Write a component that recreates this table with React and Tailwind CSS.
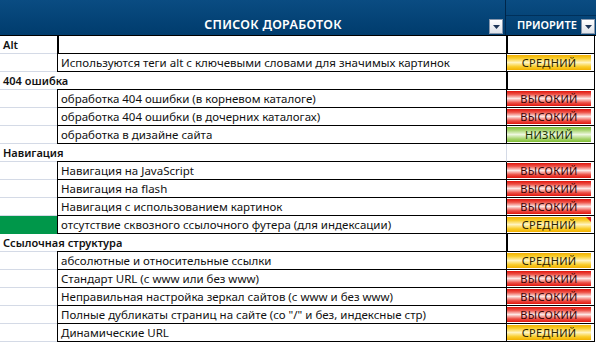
import React from 'react'

const rows = [
  { type: 'cat', label: 'Alt', boxB: true, lineC: 'black' },
  { label: 'Используются теги alt с ключевыми словами для значимых картинок', p: 'mid' },
  { type: 'cat', label: '404 ошибка', boxB: false, lineC: 'black' },
  { label: 'обработка 404 ошибки (в корневом каталоге)', p: 'high' },
  { label: 'обработка 404 ошибки (в дочерних каталогах)', p: 'high' },
  { label: 'обработка в дизайне сайта', p: 'low' },
  { type: 'cat', label: 'Навигация', boxB: false, lineC: 'light' },
  { label: 'Навигация на JavaScript', p: 'high' },
  { label: 'Навигация на flash', p: 'high' },
  { label: 'Навигация с использованием картинок', p: 'high' },
  { label: 'отсутствие сквозного ссылочного футера (для индексации)', p: 'mid', green: true, note: true },
  { type: 'cat', label: 'Ссылочная структура', boxB: false, lineC: 'black' },
  { label: 'абсолютные и относительные ссылки', p: 'mid' },
  { label: 'Стандарт URL  (с www или без www)', p: 'high' },
  { label: 'Неправильная настройка зеркал сайтов (с www и без www)', p: 'high' },
  { label: 'Полные дубликаты страниц на сайте (со "/" и без, индексные стр)', p: 'high' },
  { label: 'Динамические URL', p: 'mid' },
]

const badge = {
  high: { text: 'ВЫСОКИЙ', cls: 'bg-[linear-gradient(to_bottom,#e0150c_0%,#ee5248_22%,#fde8e5_50%,#ee5248_78%,#e0150c_100%)] text-[#3a0505]' },
  mid: { text: 'СРЕДНИЙ', cls: 'bg-[linear-gradient(to_bottom,#f2b000_0%,#f9cd2a_22%,#fff4c0_50%,#f9cd2a_78%,#f2b000_100%)] text-[#2a2200]' },
  low: { text: 'НИЗКИЙ', cls: 'bg-[linear-gradient(to_bottom,#80bd34_0%,#a9d570_22%,#eef7e0_50%,#a9d570_78%,#80bd34_100%)] text-[#173000]' },
}

function DropButton() {
  return (
    <div className="w-[14px] h-[15px] border border-[#8797ad] bg-[linear-gradient(to_bottom,#ffffff,#dde2e9)] flex items-center justify-center shrink-0">
      <svg width="7" height="4" viewBox="0 0 7 4">
        <path d="M0 0h7L3.5 4z" fill="#1d3557" />
      </svg>
    </div>
  )
}

function Badge({ p, note }) {
  const b = badge[p]
  return (
    <div className={`relative h-full mr-[3px] flex items-center justify-center text-[11px] tracking-[0.3px] ${b.cls}`}>
      {b.text}
      {note && (
        <div className="absolute top-0 right-0 w-0 h-0 border-t-[5px] border-t-[#e0201a] border-l-[5px] border-l-transparent" />
      )}
    </div>
  )
}

export default function App() {
  return (
    <div className="w-[596px] h-[344px] bg-white overflow-hidden text-[#111] font-['Noto_Sans','Open_Sans',sans-serif] text-[11.5px] leading-none">
      {/* header */}
      <div className="flex h-[36px] border-b border-black">
        <div className="w-[506px] flex bg-[linear-gradient(to_bottom,#0a4c82,#003c6d)] border-r border-[#00264a]">
          <div className="w-[57px]" />
          <div className="flex-1 flex items-end pb-[1px]">
            <div className="flex-1 text-center text-white font-semibold text-[12.5px] tracking-[0.3px] pb-[3px]">СПИСОК ДОРАБОТОК</div>
            <div className="pr-[2px]"><DropButton /></div>
          </div>
        </div>
        <div className="w-[90px] flex flex-col bg-[linear-gradient(to_bottom,#0a4c82,#003c6d)]">
          <div className="h-[16px] border-b border-[#00305a]" />
          <div className="flex-1 flex items-end pb-[1px]">
            <div className="flex-1 whitespace-nowrap text-white font-semibold text-[11px] pl-[11px] pb-[4px]">ПРИОРИТЕ</div>
            <div className="pr-[1px]"><DropButton /></div>
          </div>
        </div>
      </div>

      {rows.map((r, i) =>
        r.type === 'cat' ? (
          <div key={i} className="flex h-[18px] relative">
            <div className="w-[57px] border-b border-[#d4dae6]" />
            <div className={`w-[449px] ${r.boxB ? 'border-l-2 border-black border-b' : 'border-b border-black'}`} />
            <div className={`w-[89px] border-b border-black border-r ${r.lineC === 'black' ? 'border-l-2 border-l-black' : 'border-l border-l-[#d4dae6]'}`} />
            <div className="absolute left-[3px] top-0 h-[17px] flex items-center font-semibold text-[11px] whitespace-nowrap">{r.label}</div>
          </div>
        ) : (
          <div key={i} className="flex h-[18px]">
            <div className={`w-[57px] border-b ${r.green ? 'bg-[#00974a] border-[#00974a]' : 'border-[#d4dae6]'}`} />
            <div className="w-[449px] border-l border-b border-black flex items-center pl-[3px] whitespace-nowrap overflow-hidden">{r.label}</div>
            <div className="w-[89px] border-l border-r border-b border-black py-[1px]">
              <Badge p={r.p} note={r.note} />
            </div>
          </div>
        )
      )}
      <div className="flex h-[4px]">
        <div className="w-[57px] border-b border-[#d4dae6]" />
      </div>
    </div>
  )
}
